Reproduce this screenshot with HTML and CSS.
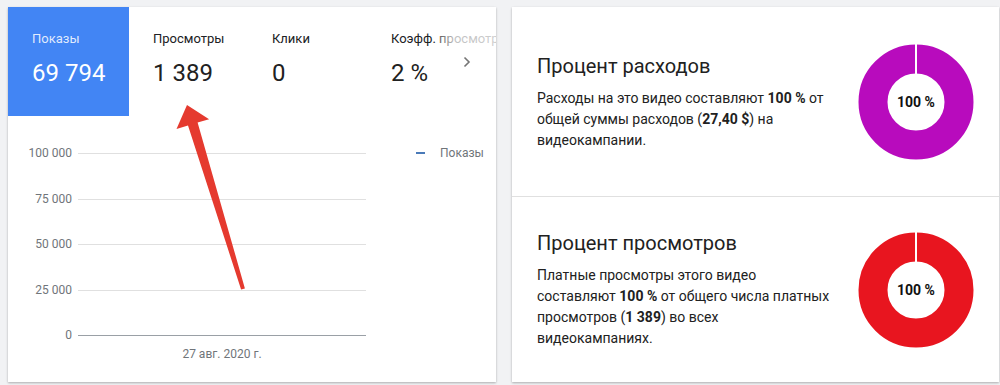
FILE: index.html
```html
<!DOCTYPE html>
<html lang="ru">
<head>
<meta charset="utf-8">
<link rel="stylesheet" href="styles.css">
</head>
<body>
<div class="page">
  <div class="card left">
    <div class="tabs">
      <div class="tab active">
        <div class="tab-label">Показы</div>
        <div class="tab-value">69 794</div>
      </div>
      <div class="tab">
        <div class="tab-label">Просмотры</div>
        <div class="tab-value">1 389</div>
      </div>
      <div class="tab">
        <div class="tab-label">Клики</div>
        <div class="tab-value">0</div>
      </div>
      <div class="tab last">
        <div class="tab-label">Коэфф. просмотров</div>
        <div class="tab-value">2 %</div>
      </div>
      <div class="fade"></div>
      <svg class="chevron" width="8" height="12" viewBox="0 0 8 12"><path d="M1.5 1.5 L6 6 L1.5 10.5" fill="none" stroke="#757575" stroke-width="1.6"/></svg>
    </div>
    <div class="chart">
      <div class="grid">
        <div class="row"><span class="lab">100 000</span><span class="line"></span></div>
        <div class="row"><span class="lab">75 000</span><span class="line"></span></div>
        <div class="row"><span class="lab">50 000</span><span class="line"></span></div>
        <div class="row"><span class="lab">25 000</span><span class="line"></span></div>
        <div class="row base"><span class="lab">0</span><span class="line"></span></div>
        <div class="date">27 авг. 2020 г.</div>
      </div>
      <div class="legend"><span class="dash"></span><span>Показы</span></div>
    </div>
    <svg class="arrow" width="488" height="375" viewBox="0 0 488 375">
      <polygon fill="#e53a2f" points="179,98 168.5,122 180,118.6 233.1,282.6 236.9,281.4 189.6,115.6 201.1,112.2"/>
    </svg>
  </div>
  <div class="card right">
    <div class="section">
      <div class="text">
        <div class="title">Процент расходов</div>
        <p class="desc">Расходы на это видео составляют <b>100&nbsp;%</b> от<br>общей суммы расходов (<b>27,40&nbsp;$</b>) на<br>видеокампании.</p>
      </div>
      <div class="donut">
        <svg width="116" height="116" viewBox="0 0 116 116">
          <circle cx="58" cy="58" r="43" fill="none" stroke="#b80bbd" stroke-width="29"/>
          <rect x="57" y="0" width="2" height="30" fill="#fff"/>
        </svg>
        <span class="pct">100 %</span>
      </div>
    </div>
    <div class="section second">
      <div class="text">
        <div class="title">Процент просмотров</div>
        <p class="desc">Платные просмотры этого видео<br>составляют <b>100&nbsp;%</b> от общего числа платных<br>просмотров (<b>1&nbsp;389</b>) во всех<br>видеокампаниях.</p>
      </div>
      <div class="donut">
        <svg width="116" height="116" viewBox="0 0 116 116">
          <circle cx="58" cy="58" r="43" fill="none" stroke="#e8151f" stroke-width="29"/>
          <rect x="57" y="0" width="2" height="30" fill="#fff"/>
        </svg>
        <span class="pct">100 %</span>
      </div>
    </div>
  </div>
</div>
</body>
</html>
```

FILE: styles.css
```css
* { box-sizing: border-box; }
html, body { margin: 0; padding: 0; }
body {
  background: #f1f2f4;
  font-family: Roboto, "Noto Sans", Arial, sans-serif;
  color: #212121;
  width: 1000px;
  height: 385px;
  overflow: hidden;
}
.page {
  display: flex;
  gap: 16px;
  padding: 7px 0 0 8px;
}
.card {
  background: #fff;
  box-shadow: 0 1px 2px rgba(0,0,0,0.22), 0 1px 3px rgba(0,0,0,0.08);
  height: 375px;
}
.left {
  width: 488px;
  position: relative;
  overflow: hidden;
}
.tabs {
  display: flex;
  height: 109px;
  position: relative;
}
.tab {
  width: 119px;
  padding: 22px 0 0 24px;
  white-space: nowrap;
}
.tab.active {
  width: 121px;
  background: #4285f4;
  color: #fff;
}
.tab.active .tab-label { color: rgba(255,255,255,0.85); }
.tab.last { width: 129px; overflow: hidden; }
.tab-label {
  font-size: 13px;
  line-height: 20px;
  color: #202124;
}
.tab-value {
  font-size: 24px;
  line-height: 30px;
  margin-top: 9px;
  color: #212121;
}
.tab.active .tab-value { color: #fff; }
.fade {
  position: absolute;
  left: 432px;
  top: 0;
  width: 56px;
  height: 50px;
  background: linear-gradient(to right, rgba(255,255,255,0.3) 0, rgba(255,255,255,0.72) 14px, rgba(255,255,255,0.78) 100%);
}
.chevron {
  position: absolute;
  left: 455px;
  top: 49px;
}
.chart {
  display: flex;
  padding-top: 37px;
}
.grid {
  width: 358px;
}
.row {
  display: flex;
  height: 45.5px;
}
.lab {
  width: 64px;
  text-align: right;
  font-size: 12px;
  line-height: 14px;
  margin-top: -7px;
  height: 14px;
  color: #70757a;
}
.line {
  width: 288px;
  margin-left: 6px;
  border-top: 1px solid #e0e0e0;
}
.row.base { height: 12px; }
.row.base .line { border-top-color: #9aa0a6; }
.date {
  font-size: 12px;
  color: #70757a;
  line-height: 14px;
  padding-left: 70px;
  width: 358px;
  text-align: center;
}
.legend {
  display: flex;
  align-items: center;
  gap: 15px;
  margin-left: 50px;
  height: 14px;
  margin-top: -7px;
  font-size: 12px;
  color: #70757a;
}
.dash {
  width: 9px;
  height: 2px;
  background: #4a7ab8;
}
.arrow {
  position: absolute;
  left: 0;
  top: 0;
}
.right {
  width: 487px;
  display: flex;
  flex-direction: column;
}
.section {
  display: flex;
  align-items: center;
  justify-content: space-between;
  height: 189px;
  padding: 0 25px 0 25px;
}
.section.second {
  height: 186px;
  border-top: 1px solid #e0e0e0;
}
.text { width: 310px; }
.title {
  font-size: 20px;
  line-height: 26px;
  color: #212121;
  margin-bottom: 9px;
}
.desc {
  margin: 0;
  font-size: 14px;
  line-height: 21px;
  color: #212121;
  white-space: nowrap;
}
.desc b { font-weight: 700; }
.donut {
  position: relative;
  width: 116px;
  height: 116px;
  display: flex;
  align-items: center;
  justify-content: center;
}
.donut svg { position: absolute; left: 0; top: 0; }
.pct {
  position: relative;
  font-size: 14px;
  font-weight: 700;
  color: #111;
}
```
